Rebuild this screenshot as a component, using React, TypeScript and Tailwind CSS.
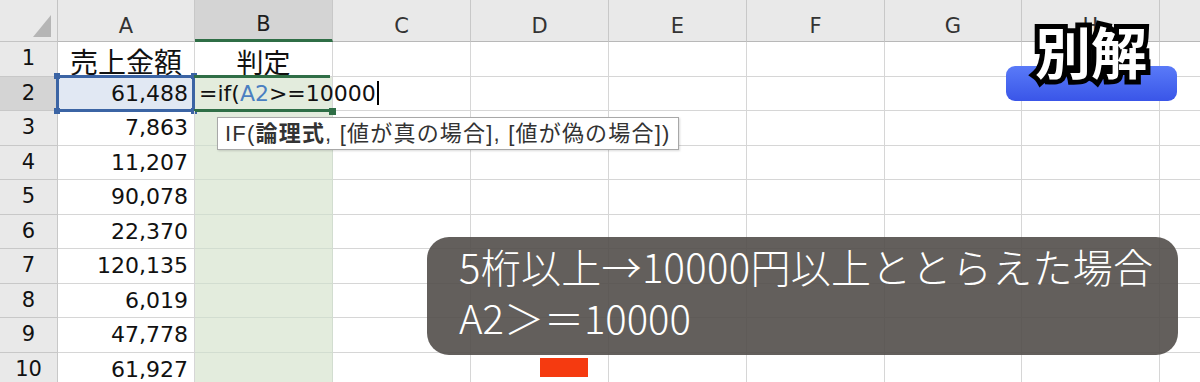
import React from 'react';

// Column letters, after the row-number gutter (I is off the right edge)
const columns = ['A', 'B', 'C', 'D', 'E', 'F', 'G', 'H', 'I'];

// Sales amounts for rows 2..10
const amounts = ['61,488', '7,863', '11,207', '90,078', '22,370', '120,135', '6,019', '47,778', '61,927'];

const cellFont = "font-['DejaVu_Sans','Noto_Sans_CJK_JP',sans-serif]";

const Handle: React.FC<{ className: string }> = ({ className }) => (
  <div className={`absolute h-[6px] w-[6px] bg-[#3b64a4] ${className}`} />
);

const App: React.FC = () => {
  const rows = Array.from({ length: 10 }, (_, i) => i + 1);

  return (
    <div className={`relative h-[382px] w-[1200px] overflow-hidden bg-white text-[#111] ${cellFont}`}>
      <div className="grid w-[1300px] grid-cols-[58px_137px_138px_138px_138px_138px_138px_137px_138px_138px] grid-rows-[42px_repeat(10,34.5px)]">
        {/* Corner */}
        <div className="relative border-b border-r border-[#c4c4c4] bg-[#e9e9e9]">
          <svg className="absolute left-[33px] top-[15px]" width="18" height="22" viewBox="0 0 18 22">
            <polygon points="18,0 18,22 0,22" fill="#b5b5b5" />
          </svg>
        </div>

        {/* Column headers */}
        {columns.map((c) => (
          <div
            key={c}
            className={`flex items-end justify-center pb-[4px] text-[21px] leading-none border-r border-[#c8c8c8] ${
              c === 'B'
                ? 'bg-[#d4d4d4] border-b-[3px] border-b-[#2f6e46] text-[#1d1d1d]'
                : 'bg-[#e9e9e9] border-b border-b-[#b8b8b8] text-[#333]'
            }`}
          >
            {c === 'I' ? '' : c}
          </div>
        ))}

        {/* Rows */}
        {rows.map((r) => (
          <React.Fragment key={r}>
            <div
              className={`flex items-center justify-center text-[21px] border-b border-r border-[#c8c8c8] ${
                r === 2 ? 'bg-[#d4d4d4]' : 'bg-[#e9e9e9]'
              }`}
            >
              {r}
            </div>
            {columns.map((c) => {
              if (c === 'A') {
                if (r === 1) {
                  return (
                    <div key={c} className="flex items-end justify-center border-b border-r border-[#d6d6d6] text-[28px] leading-none pb-[1px] font-['Noto_Sans_CJK_JP',sans-serif]">
                      売上金額
                    </div>
                  );
                }
                const selected = r === 2;
                return (
                  <div
                    key={c}
                    className={`relative flex items-center justify-end pr-[6px] text-[22px] border-b border-r border-[#d6d6d6] ${
                      selected ? 'bg-[#e1e8f3]' : ''
                    }`}
                  >
                    {amounts[r - 2]}
                    {selected && (
                      <div className="absolute -left-[2px] -top-[2px] h-[37px] w-[139px] border-[3px] border-[#3b64a4]">
                        <Handle className="-left-[5px] -top-[5px]" />
                        <Handle className="-right-[5px] -top-[5px]" />
                        <Handle className="-left-[5px] -bottom-[5px]" />
                        <Handle className="-right-[5px] -bottom-[5px]" />
                      </div>
                    )}
                  </div>
                );
              }
              if (c === 'B') {
                if (r === 1) {
                  return (
                    <div key={c} className="flex items-end justify-center border-b border-r border-[#d6d6d6] text-[27px] leading-none pb-[1px] font-['Noto_Sans_CJK_JP',sans-serif]">
                      判定
                    </div>
                  );
                }
                if (r === 2) {
                  return (
                    <div key={c} className="relative flex items-center bg-[#e3ecdd] pl-[4px] text-[22px] whitespace-nowrap border-b border-r border-[#d6d6d6]">
                      <span>=if(</span>
                      <span className="text-[#4a7fc1]">A2</span>
                      <span>&gt;=10000</span>
                      <span className="ml-[1px] h-[24px] w-[2px] shrink-0 bg-black" />
                      <div className="absolute -left-[1px] -top-[2px] h-[37px] w-[136px] border-y-[3px] border-[#2f6e46]" />
                      <div className="absolute -right-[4px] -bottom-[5px] h-[7px] w-[7px] bg-[#2f6e46]" />
                    </div>
                  );
                }
                return <div key={c} className="border-b border-r border-[#d2ddd0] bg-[#e3ecdd]" />;
              }
              return <div key={c} className="border-b border-r border-[#d6d6d6]" />;
            })}
          </React.Fragment>
        ))}
      </div>

      {/* Function tooltip */}
      <div className="absolute left-[217px] top-[117px] flex h-[33px] items-center whitespace-nowrap border border-[#a8a8a8] bg-white px-[7px] text-[22px] tracking-[1.2px] text-[#333] shadow-[1px_1px_2px_rgba(0,0,0,0.15)] font-['Liberation_Sans','Noto_Sans_CJK_JP',sans-serif]">
        IF(<span className="font-bold">論理式</span>, [値が真の場合], [値が偽の場合])
      </div>

      {/* Blue label with outlined title */}
      <div className="absolute left-[1006px] top-[66px] h-[35px] w-[171px] rounded-[9px] bg-gradient-to-b from-[#5a7af8] to-[#3a55e8]" />
      <div className="absolute left-[1035px] top-[22px] text-[56px] leading-none font-bold text-white font-['Noto_Sans_CJK_JP',sans-serif] [-webkit-text-stroke:10px_#000] [paint-order:stroke_fill]">
        別解
      </div>

      {/* Caption */}
      <div className="absolute left-[427px] top-[237px] flex h-[118px] w-[751px] flex-col justify-center rounded-[22px] bg-[rgba(82,78,74,0.9)] pb-[8px] pl-[32px] text-[40px] leading-[51px] font-light text-white whitespace-nowrap font-['Noto_Sans_CJK_JP',sans-serif]">
        <div className="tracking-[0.3px]">5桁以上→10000円以上ととらえた場合</div>
        <div>A2＞＝10000</div>
      </div>

      {/* Red marker */}
      <div className="absolute left-[540px] top-[358px] h-[19px] w-[48px] bg-[#f53a10]" />
    </div>
  );
};

export default App;
